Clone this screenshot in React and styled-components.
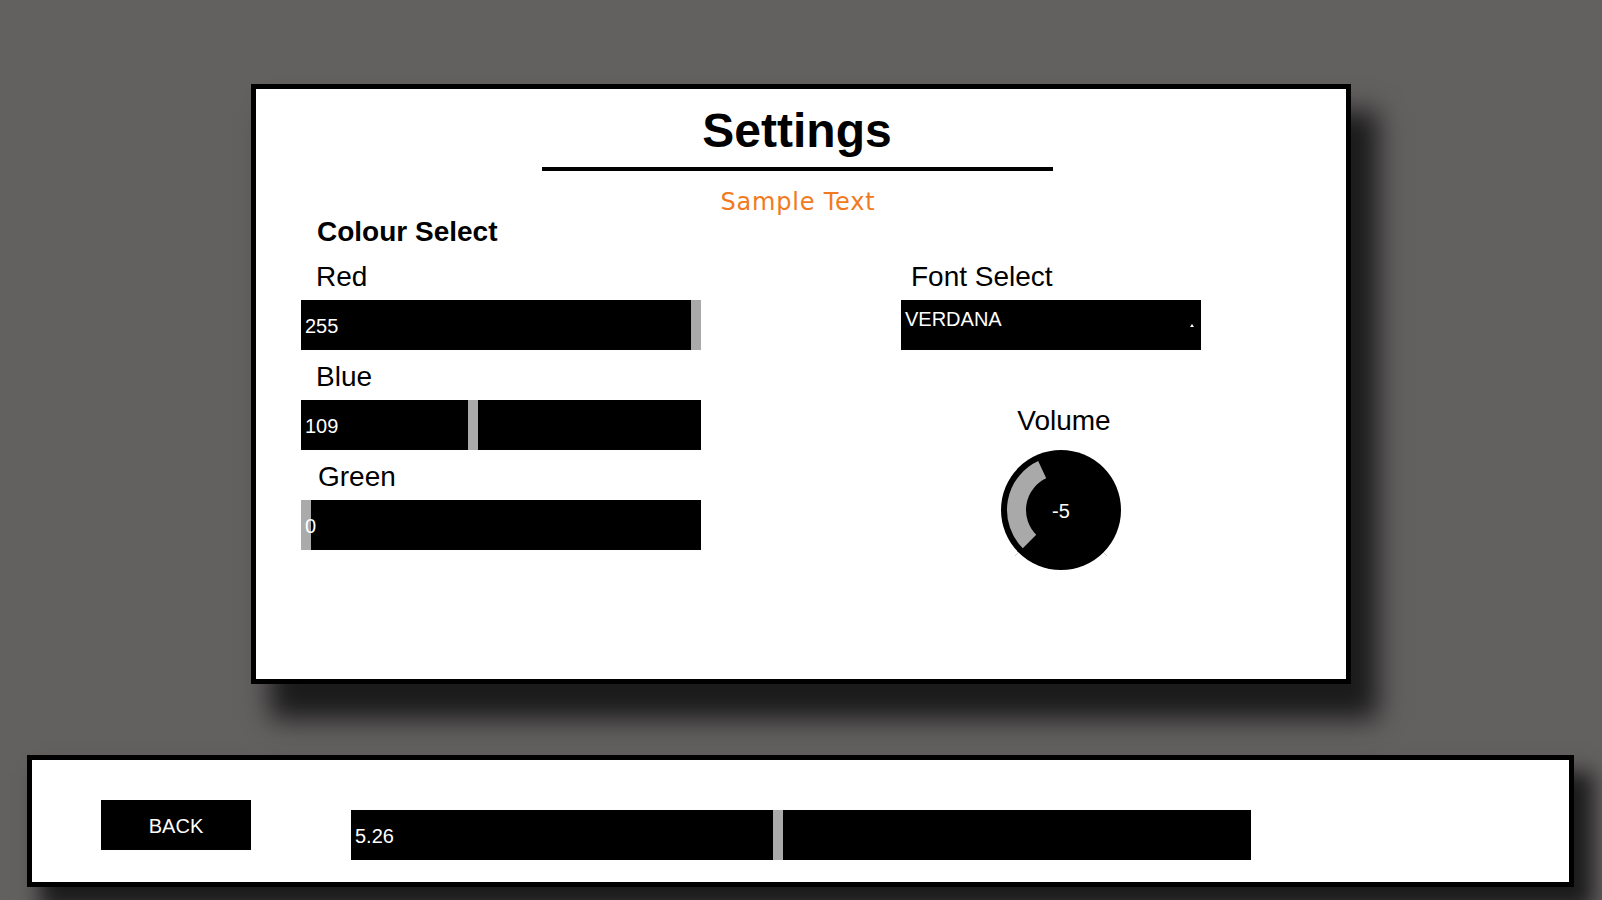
import React from 'react';
import styled, { createGlobalStyle } from 'styled-components';

const GlobalStyle = createGlobalStyle`
  html, body {
    margin: 0;
    height: 100%;
    background-color: #636060;
    font-family: 'Liberation Sans', Arial, sans-serif;
    overflow: hidden;
  }
`;

const Page = styled.div`
  display: flex;
  flex-direction: column;
  align-items: center;
  padding-top: 84px;
`;

const Panel = styled.div`
  box-sizing: border-box;
  width: 1100px;
  height: 600px;
  border: 5px solid #000;
  background-color: #fff;
  box-shadow: 23px 31px 25px 4px rgba(0, 0, 0, 0.72);
  padding: 14px 45px 0 45px;
  display: flex;
  flex-direction: column;
`;

const Header = styled.div`
  display: flex;
  flex-direction: column;
  align-items: center;
  margin-right: 6px;
`;

const Title = styled.h1`
  margin: 0;
  margin-right: 2px;
  font-size: 48px;
  line-height: 56px;
  font-weight: 700;
  color: #000;
`;

const TitleRule = styled.div`
  width: 511px;
  height: 4px;
  margin-top: 8px;
  margin-right: 2px;
  background-color: #000;
`;

const SampleText = styled.div`
  margin-top: 17px;
  font-family: 'DejaVu Sans', Verdana, sans-serif;
  font-size: 24px;
  line-height: 28px;
  letter-spacing: 0.8px;
  color: #f17a21;
`;

const Body = styled.div`
  display: flex;
  gap: 200px;
`;

const LeftColumn = styled.div`
  width: 400px;
  display: flex;
  flex-direction: column;
`;

const RightColumn = styled.div`
  display: flex;
  flex-direction: column;
  align-items: flex-start;
  padding-top: 46px;
`;

const SectionHeading = styled.h2`
  margin: 0 0 14px 0;
  padding-left: 16px;
  font-size: 28px;
  line-height: 32px;
  font-weight: 700;
`;

const Label = styled.div`
  font-size: 28px;
  line-height: 30px;
  color: #000;
  padding-left: ${(p) => p.$indent ?? 15}px;
  margin-bottom: 8px;
`;

const Track = styled.div`
  position: relative;
  box-sizing: border-box;
  width: ${(p) => p.$width}px;
  height: 50px;
  background-color: #000;
  margin-bottom: ${(p) => p.$gap ?? 12}px;
  flex-shrink: 0;
`;

const Thumb = styled.div`
  position: absolute;
  top: 0;
  width: 10px;
  height: 100%;
  background-color: #aaaaaa;
`;

const TrackValue = styled.span`
  position: absolute;
  left: 4px;
  top: 0;
  font-size: 20px;
  line-height: 52px;
  color: #fff;
`;

const Dropdown = styled.div`
  box-sizing: border-box;
  width: 300px;
  height: 50px;
  background-color: #000;
  color: #fff;
  font-size: 20px;
  line-height: 23px;
  padding: 8px 7px 0 4px;
  display: flex;
  justify-content: space-between;
`;

const Caret = styled.span`
  align-self: flex-start;
  margin-top: 16px;
  width: 0;
  height: 0;
  border-left: 2px solid transparent;
  border-right: 2px solid transparent;
  border-bottom: 3px solid #fff;
`;

const VolumeGroup = styled.div`
  margin-top: 56px;
  margin-left: 100px;
  width: 120px;
  display: flex;
  flex-direction: column;
  align-items: center;
`;

const VolumeLabel = styled.div`
  font-size: 28px;
  line-height: 30px;
  padding-left: 6px;
  margin-bottom: 14px;
`;

const Knob = styled.div`
  position: relative;
  width: 120px;
  height: 120px;

  svg {
    display: block;
    overflow: visible;
  }
`;

const KnobValue = styled.span`
  position: absolute;
  inset: 0;
  display: flex;
  align-items: center;
  justify-content: center;
  padding-top: 3px;
  font-size: 20px;
  color: #fff;
`;

const BottomBar = styled.div`
  box-sizing: border-box;
  width: 1547px;
  height: 132px;
  margin-top: 71px;
  margin-left: -1px;
  border: 5px solid #000;
  background-color: #fff;
  box-shadow: 16px 20px 20px 3px rgba(0, 0, 0, 0.72);
  padding-left: 69px;
  display: flex;
  align-items: flex-start;
`;

const BackButton = styled.button`
  margin-top: 40px;
  width: 150px;
  height: 50px;
  border: none;
  background-color: #000;
  color: #fff;
  font-family: 'Liberation Sans', Arial, sans-serif;
  font-size: 20px;
  padding: 2px 0 0 0;
  cursor: pointer;
`;

const BarSlot = styled.div`
  margin-top: 50px;
  margin-left: 100px;
`;

function Slider({ value, max, width, gap }) {
  const frac = value / max;
  return (
    <Track $width={width} $gap={gap}>
      <Thumb style={{ left: `calc(${frac} * (100% - 10px))` }} />
      <TrackValue>{value}</TrackValue>
    </Track>
  );
}

function VolumeKnob({ value }) {
  return (
    <Knob>
      <svg width="120" height="120" viewBox="0 0 120 120">
        <circle cx="60" cy="60" r="60" fill="#000" />
        <path
          d="M 28.53 91.47 A 44.5 44.5 0 0 1 41.19 19.67"
          stroke="#a9a9a9"
          strokeWidth="19"
          fill="none"
        />
        <line x1="16.9" y1="103.1" x2="14" y2="106" stroke="#c8c8c8" strokeWidth="1" />
        <line x1="103.1" y1="103.1" x2="106" y2="106" stroke="#c8c8c8" strokeWidth="1" />
      </svg>
      <KnobValue>{value}</KnobValue>
    </Knob>
  );
}

const colours = [
  { name: 'Red', value: 255, indent: 15 },
  { name: 'Blue', value: 109, indent: 15 },
  { name: 'Green', value: 0, indent: 17 },
];

export default function App() {
  return (
    <>
      <GlobalStyle />
      <Page>
        <Panel>
          <Header>
            <Title>Settings</Title>
            <TitleRule />
            <SampleText>Sample Text</SampleText>
          </Header>
          <Body>
            <LeftColumn>
              <SectionHeading>Colour Select</SectionHeading>
              {colours.map((c) => (
                <React.Fragment key={c.name}>
                  <Label $indent={c.indent}>{c.name}</Label>
                  <Slider value={c.value} max={255} width={400} />
                </React.Fragment>
              ))}
            </LeftColumn>
            <RightColumn>
              <Label $indent={10}>Font Select</Label>
              <Dropdown>
                <span>VERDANA</span>
                <Caret />
              </Dropdown>
              <VolumeGroup>
                <VolumeLabel>Volume</VolumeLabel>
                <VolumeKnob value={-5} />
              </VolumeGroup>
            </RightColumn>
          </Body>
        </Panel>
        <BottomBar>
          <BackButton>BACK</BackButton>
          <BarSlot>
            <Slider value={5.26} max={11.09} width={900} gap={0} />
          </BarSlot>
        </BottomBar>
      </Page>
    </>
  );
}
